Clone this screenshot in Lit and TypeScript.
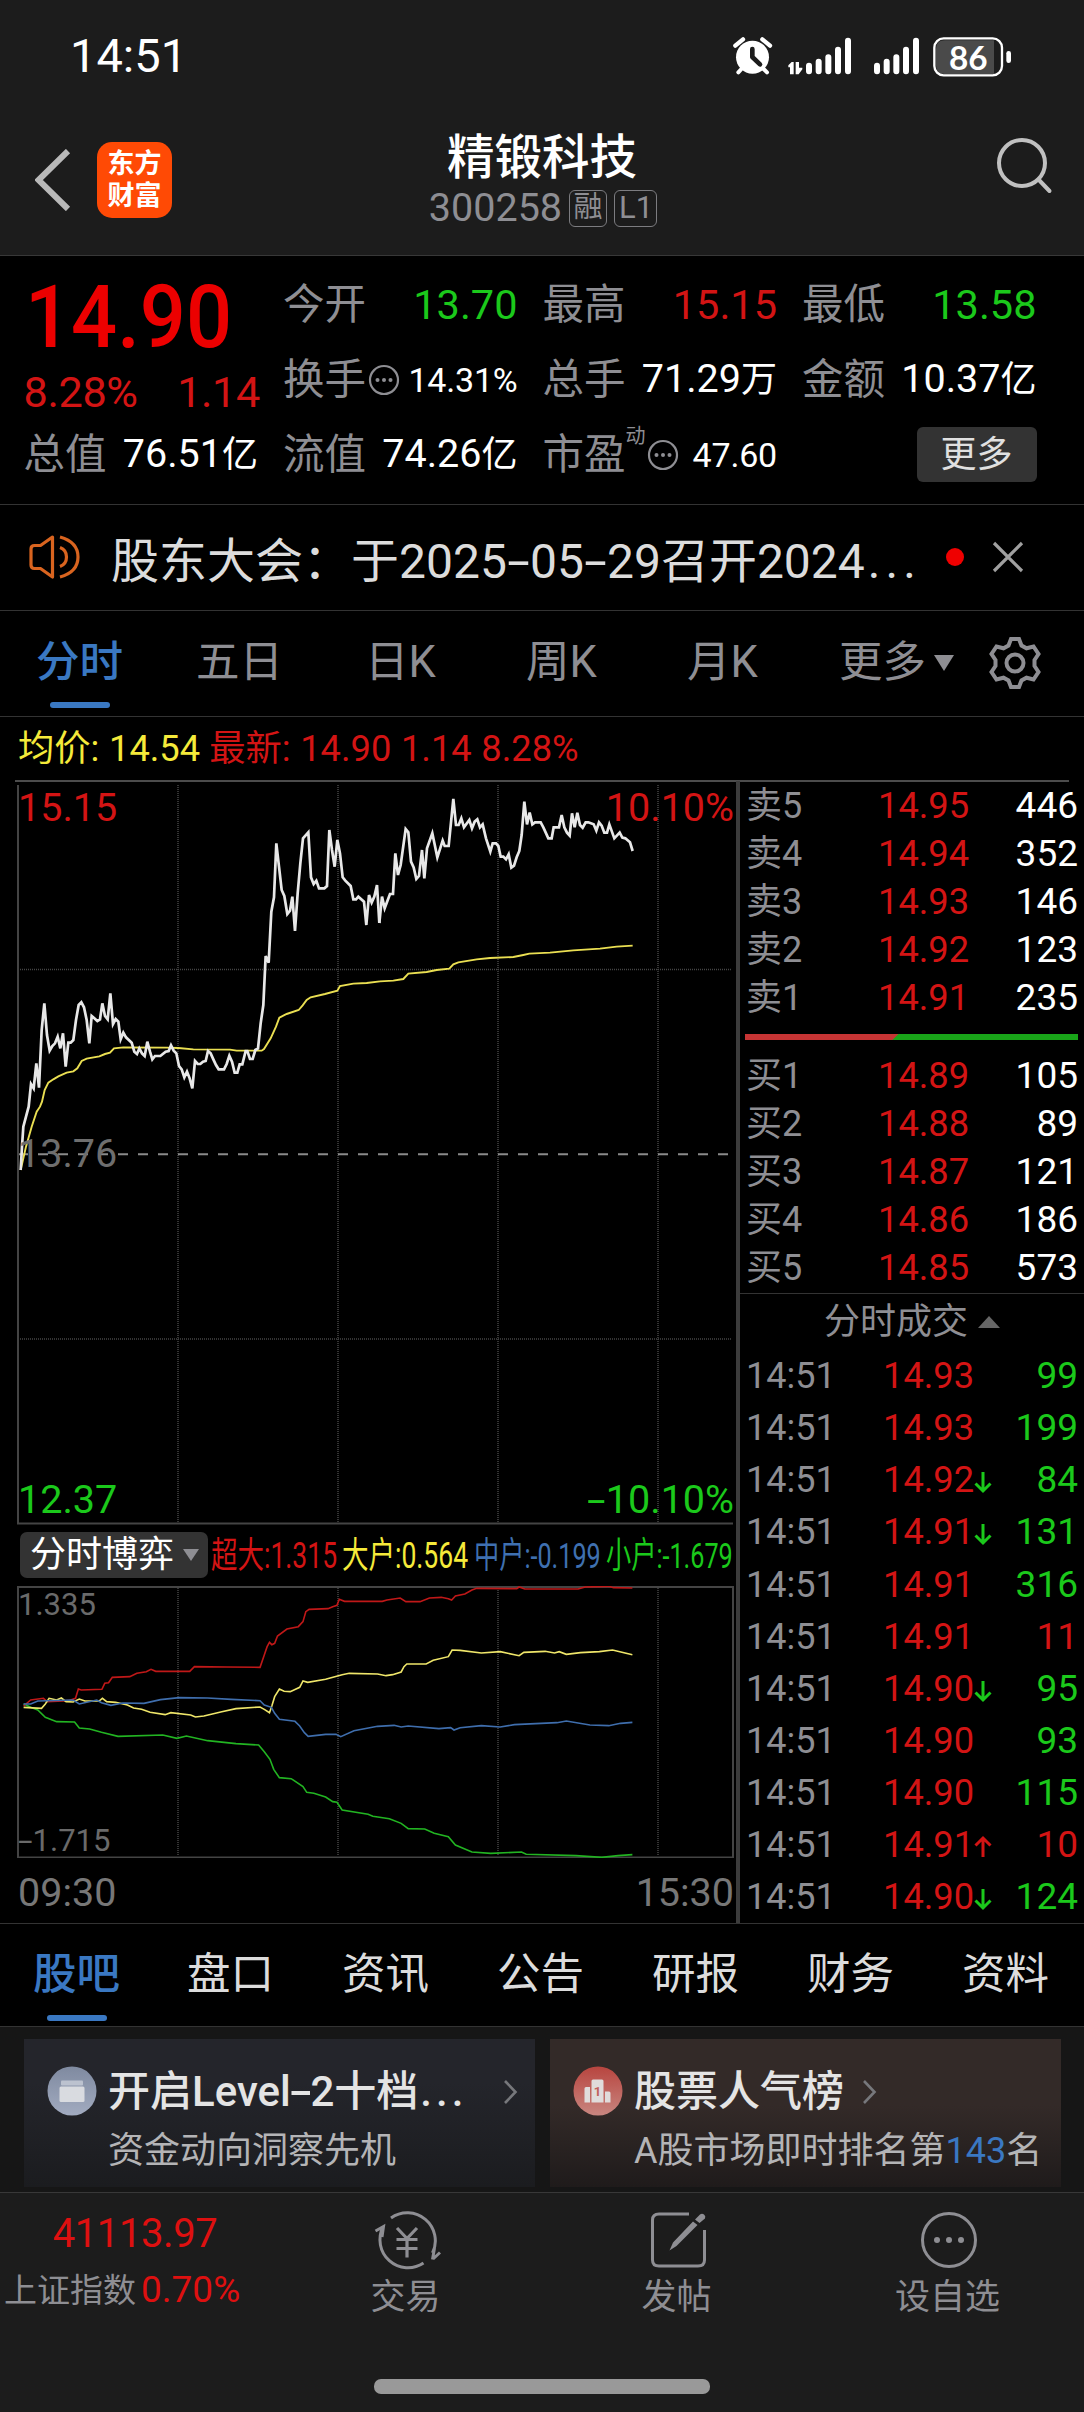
import { LitElement, html, svg, css, nothing } from "lit";
import { customElement, property } from "lit/decorators.js";

type Tone = "up" | "down" | "plain";

/* Wraps every hyphen so that it is drawn as wide as a digit-style minus. */
const dashed = (text: string) =>
  text.split("-").map((part, i) => (i === 0 ? part : html`<span class="dash">-</span>${part}`));

const dashStyle = css`
  .dash {
    display: inline-block;
    width: 0.47em;
    text-align: center;
    transform: scaleX(1.7);
  }
`;

/* ---------- chart data (canvas units) ---------- */

const PRICE_MORNING =
  "62,1200 66,1130 70,1070 78,1040 86,1010 93,942 101,955 109,880 117,953 125,780 133,700 141,795 149,842 157,828 165,820 173,800 181,835 189,790 197,890 205,818 212,818 220,810 228,750 236,705 244,697 252,712 260,750 268,820 275,738 283,745 292,753 300,748 307,700 315,738 323,748 331,670 339,762 347,747 355,755 362,808 370,788 378,802 395,818 403,845 411,852 418,835 426,850 434,858 442,815 450,845 457,868 465,858 481,858 497,845 506,843 513,826 521,842 529,850 537,888 545,898 553,922 561,905 569,925 577,955 585,873 593,882 601,882 609,875 617,873 624,843 632,850 640,868 648,885 656,898 672,898 680,882 688,857 696,875 704,908 712,908 719,883 727,883 737,843 742,843 750,867 758,867 766,840 774,835 782,760 790,705 797,558 806,578 814,425 822,382 829,220 837,290 845,360 853,378 862,432 870,422 877,380 885,483 893,370 901,280 909,205 925,187 933,322 941,342 949,332 957,355 973,355 981,348 988,180 996,240 1004,290 1012,210 1020,250 1028,322 1036,332 1052,348 1060,388 1068,388 1075,380 1092,395 1099,465 1107,375 1115,398 1123,380 1131,345 1138,459";
const PRICE_AFTERNOON =
  "418,459 426,380 434,415 450,372 459,372 466,250 474,315 482,285 497,177 505,187 513,275 521,292 529,327 537,318 546,240 553,325 561,235 577,190 592,262 608,212 614,228 626,228 640,87 648,165 656,165 664,145 672,172 688,150 696,175 704,155 712,148 720,172 728,163 738,205 751,245 758,220 768,220 775,228 782,260 790,260 798,268 806,253 814,293 822,287 830,262 838,243 845,195 853,95 861,163 869,128 877,163 885,157 902,157 910,172 925,205 935,205 941,172 957,172 965,135 973,172 981,188 989,197 996,130 1004,172 1012,128 1020,165 1028,173 1037,157 1045,157 1061,163 1069,182 1077,157 1085,167 1093,188 1101,188 1108,163 1123,205 1139,188 1147,203 1156,205 1170,217 1178,243";
const AVG_MORNING =
  "62,1200 78,1130 95,1070 110,1025 120,1010 126,995 134,960 145,938 160,928 175,919 200,908 220,904 232,895 245,873 260,866 298,859 315,852 330,848 342,835 370,832 500,833 535,834 580,838 690,839 710,842 785,842 792,837 812,805 828,770 838,743 860,732 896,720 908,706 920,690 932,682 975,672 1012,662 1020,648 1060,641 1100,639 1140,634";
const AVG_AFTERNOON =
  "420,634 460,632 490,627 505,611 560,606 590,600 628,596 640,583 655,577 710,568 750,564 820,561 850,555 868,551 930,548 1000,541 1080,536 1130,530 1178,527";

const FLOWS: { cls: string; points: string }[] = [
  {
    cls: "green",
    points:
      "50,672 65,682 80,690 96,712 120,725 158,726 168,744 190,747 215,757 250,769 345,765 375,775 395,768 440,782 500,791 548,795 560,815 572,838 580,868 592,893 617,896 642,920 650,937 665,940 690,951 705,965 714,967 725,990 780,1003 790,1009 825,1016 850,1030 865,1046 900,1047 920,1060 950,1070 965,1095 1000,1116 1040,1120 1105,1116 1115,1123 1220,1127 1275,1132 1310,1127 1340,1124",
  },
  {
    cls: "red",
    points:
      "50,678 65,660 92,655 100,665 145,662 160,655 166,627 172,630 216,628 222,610 230,608 238,592 275,590 290,580 310,575 320,568 330,574 402,574 412,560 480,561 551,562 560,525 566,500 571,487 576,494 582,490 588,468 608,447 632,440 642,425 648,395 655,388 695,386 705,380 714,376 719,358 730,364 810,364 820,360 848,354 860,365 890,365 910,354 935,352 950,356 957,360 965,348 985,342 1000,330 1010,325 1095,326 1100,321 1112,327 1225,327 1240,321 1290,319 1300,323 1340,324",
  },
  {
    cls: "yellow",
    points:
      "50,682 88,685 96,672 104,655 120,660 130,654 140,665 155,666 168,657 180,663 210,663 217,655 226,665 245,667 270,675 283,684 300,688 318,697 350,704 362,698 404,705 414,711 432,708 470,695 500,686 551,681 560,688 571,698 576,678 582,650 592,627 602,634 615,635 635,622 642,603 652,607 690,598 725,584 740,580 800,582 818,587 832,584 850,576 856,560 862,552 903,552 918,541 950,530 958,510 975,511 1020,519 1060,515 1100,527 1110,517 1155,514 1175,519 1185,515 1200,523 1230,518 1270,515 1298,510 1340,524",
  },
  {
    cls: "blue",
    points:
      "50,672 65,672 80,663 155,660 168,672 205,660 215,668 235,676 260,669 305,670 340,659 380,653 440,654 490,658 551,662 560,675 575,682 582,700 592,718 625,724 635,738 645,758 653,769 690,763 712,763 722,770 750,752 800,739 835,736 850,741 865,738 930,746 955,743 962,750 975,743 1020,737 1060,741 1090,734 1180,728 1200,723 1250,735 1290,737 1315,730 1340,727",
  },
];

/* Legend entries share one slot width, so longer ones are condensed further. */
const LEGEND = [
  { cls: "red", text: "超大:1.315", x: 3, squeeze: 0.737 },
  { cls: "yellow", text: "大户:0.564", x: 134, squeeze: 0.737 },
  { cls: "blue", text: "中户:-0.199", x: 266, squeeze: 0.7 },
  { cls: "green", text: "小户:-1.679", x: 398, squeeze: 0.7 },
];

const ASKS: [string, string, string][] = [
  ["卖5", "14.95", "446"],
  ["卖4", "14.94", "352"],
  ["卖3", "14.93", "146"],
  ["卖2", "14.92", "123"],
  ["卖1", "14.91", "235"],
];
const BIDS: [string, string, string][] = [
  ["买1", "14.89", "105"],
  ["买2", "14.88", "89"],
  ["买3", "14.87", "121"],
  ["买4", "14.86", "186"],
  ["买5", "14.85", "573"],
];
const TRADES: [string, "" | "down" | "up", string, Tone][] = [
  ["14.93", "", "99", "down"],
  ["14.93", "", "199", "down"],
  ["14.92", "down", "84", "down"],
  ["14.91", "down", "131", "down"],
  ["14.91", "", "316", "down"],
  ["14.91", "", "11", "up"],
  ["14.90", "down", "95", "down"],
  ["14.90", "", "93", "down"],
  ["14.90", "", "115", "down"],
  ["14.91", "up", "10", "up"],
  ["14.90", "down", "124", "down"],
];

/* ---------- icons ---------- */

const statusIcons = html`<svg class="status-icons" viewBox="0 0 870 180">
  <g fill="#fff">
    <circle cx="85.500" cy="99.500" r="49.500" />
    <path d="M57 46L34 65M115 46L138 65" stroke="#fff" stroke-width="13" stroke-linecap="round" />
    <path d="M55 132L43 145M116 132L129 145" stroke="#fff" stroke-width="12" stroke-linecap="round" />
    <path d="M85 75V99L108 121" fill="none" stroke="#1c1c1c" stroke-width="14" stroke-linecap="round" stroke-linejoin="round" />
    <path d="M193 130V124L203 114H209V151H198V130ZM215 114H225V131H235V136L224 151H215Z" />
  </g>
  <g stroke="#fff" stroke-width="18" stroke-linecap="round">
    <path d="M255 125V142M284 113V142M313 100V142M342 77V142M372 50V142" />
    <path d="M459 125V142M488 113V142M517 100V142M546 77V142M576 50V142" />
  </g>
  <path d="M662 49H810V150H662Q636 150 636 124V75Q636 49 662 49Z" fill="#4a4a4a" />
  <rect x="631" y="43" width="203" height="111" rx="28" fill="none" stroke="#fff" stroke-width="7" />
  <rect x="847" y="81" width="14" height="36" rx="7" fill="#fff" />
  <text x="733" y="137" text-anchor="middle" class="battery">86</text>
</svg>`;

const backIcon = html`<svg width="36" height="62" viewBox="0 0 36 62">
  <path d="M33 2L3.500 31L33 60" fill="none" stroke="#b9b9b9" stroke-width="6" />
</svg>`;

const searchIcon = html`<svg width="57" height="57" viewBox="0 0 57 57">
  <circle cx="26" cy="26" r="23" fill="none" stroke="#c0c0c0" stroke-width="4" />
  <path d="M42.500 42.500L53.500 54" stroke="#c0c0c0" stroke-width="4" stroke-linecap="round" />
</svg>`;

const infoDots = html`<svg class="dots" width="32" height="32" viewBox="0 0 32 32">
  <circle cx="16" cy="16" r="14" fill="none" stroke="#8e8e93" stroke-width="2.200" />
  <g fill="#8e8e93"><circle cx="9.500" cy="16" r="2" /><circle cx="16" cy="16" r="2" /><circle cx="22.500" cy="16" r="2" /></g>
</svg>`;

const speakerIcon = html`<svg width="52" height="46" viewBox="0 0 52 46" fill="none" stroke="#d9641f" stroke-width="3.200" stroke-linejoin="round">
  <path d="M23.500 3L11.500 11.500H5.500Q2 11.500 2 15V31Q2 34.500 5.500 34.500H11.500L23.500 43Z" />
  <path d="M31 13.500Q37.500 16 37.500 23T31 32.500M31 3Q49 8 49 23T31 43" />
</svg>`;

const closeIcon = html`<svg width="32" height="32" viewBox="0 0 32 32">
  <path d="M2 2L30 30M30 2L2 30" stroke="#a0a0a0" stroke-width="3.200" />
</svg>`;

const gearIcon = html`<svg class="gear" width="54" height="54" viewBox="0 0 54 54" fill="none" stroke="#8e8e93" stroke-width="4" stroke-linejoin="miter">
  <path d="M23 3H31L33.500 9.500L38.500 12.300L45.500 10.500L50.500 18L46.500 24V30L50.500 36L45.500 43.500L38.500 41.700L33.500 44.500L31 51H23L20.500 44.500L15.500 41.700L8.500 43.500L3.500 36L7.500 30V24L3.500 18L8.500 10.500L15.500 12.300L20.500 9.500Z" />
  <circle cx="27" cy="27" r="8.500" />
</svg>`;

const tradeIcon = html`<svg width="68" height="62" viewBox="0 0 68 62" fill="none" stroke="#8e8e93" stroke-width="3">
  <path d="M18 9A28 28 0 0 1 59.500 44M60 50L67 43.500M59.500 50.500L61.500 39" />
  <path d="M50.500 54A28 28 0 0 1 10 18M2.500 22L10.500 17.500L9 28" />
  <path d="M24 19L34 29.500L44 19M34 29V48.500M23.500 30.500H44.500M23.500 39.500H44.500" stroke-width="3.200" />
</svg>`;

const postIcon = html`<svg width="58" height="62" viewBox="0 0 58 62">
  <path d="M40 5H10Q3.500 5 3.500 11V51Q3.500 57 10 57H49Q55.500 57 55.500 51V21" fill="none" stroke="#8e8e93" stroke-width="3" />
  <path d="M44 12.500L48.500 16L27.500 37L20.500 41.500L24 33.500ZM46 10.500L51 5.500Q53 4 55 5.500T56 9.500L50.500 14Z" fill="#8e8e93" />
</svg>`;

const moreIcon = html`<svg width="60" height="62" viewBox="0 0 60 62">
  <circle cx="30" cy="31" r="26.500" fill="none" stroke="#8e8e93" stroke-width="3" />
  <g fill="#8e8e93"><circle cx="18" cy="31" r="3" /><circle cx="30" cy="31" r="3" /><circle cx="42" cy="31" r="3" /></g>
</svg>`;

const levelIcon = html`<svg width="50" height="50" viewBox="0 0 50 50">
  <defs><linearGradient id="lv" x1="0" y1="0" x2="0" y2="1"><stop offset="0" stop-color="#7f8aa0" /><stop offset="1" stop-color="#a2abc0" /></linearGradient></defs>
  <circle cx="25" cy="25" r="24.500" fill="url(#lv)" />
  <rect x="14" y="14.500" width="22" height="5" rx="1" fill="#bcc2cf" />
  <rect x="12.500" y="20.500" width="25" height="15.500" rx="1.500" fill="#d9dbe0" />
</svg>`;

const rankIcon = html`<svg width="50" height="50" viewBox="0 0 50 50">
  <defs><linearGradient id="rk" x1="0" y1="0" x2="0" y2="1"><stop offset="0" stop-color="#b8453f" /><stop offset="1" stop-color="#c88680" /></linearGradient></defs>
  <circle cx="25" cy="25" r="24.500" fill="url(#rk)" />
  <path d="M18.500 15Q18.500 13.500 20 13.500H29Q30.500 13.500 30.500 15V36.500H18.500ZM11.500 22.500Q11.500 21 13 21H17V36.500H11.500ZM32 25.500H36Q37.500 25.500 37.500 27V36.500H32Z" fill="#e0dcdb" />
  <text x="24.500" y="29.500" text-anchor="middle" class="rank">1</text>
</svg>`;

const chevron = html`<svg class="chev" width="15" height="26" viewBox="0 0 15 26">
  <path d="M2 2L12.500 13L2 24" fill="none" stroke="#77787c" stroke-width="2.600" />
</svg>`;

const arrow = (dir: "" | "down" | "up") =>
  dir === ""
    ? nothing
    : html`<svg class="arrow ${dir}" width="18" height="24" viewBox="0 0 18 24">
        <path d="M9 2V21M1.500 13.500L9 21L16.500 13.500" fill="none" stroke="currentColor" stroke-width="3" />
      </svg>`;

/* ---------- one label / value pair of the quote panel ---------- */

@customElement("quote-field")
export class QuoteField extends LitElement {
  @property() label = "";
  @property() value = "";
  @property() unit = "";
  @property() sup = "";
  @property() tone: Tone = "plain";
  @property({ type: Boolean }) info = false;

  static styles = css`
    :host {
      display: flex;
      align-items: center;
      justify-content: space-between;
      height: 75px;
      white-space: nowrap;
      line-height: 78px;
      font-size: 41.5px;
    }
    .label {
      display: flex;
      align-items: center;
      margin-left: -1.5px;
      color: #8e8e93;
      font-size: 41.5px;
    }
    .sup {
      align-self: flex-start;
      font-size: 20px;
      line-height: 20px;
      margin-top: 10px;
      margin-right: -1px;
    }
    .dots {
      margin-left: 2px;
    }
    .value.plain {
      color: #fff;
      font-size: 39.5px;
    }
    .value .unit {
      font-size: 36px;
    }
    .value.plain.small {
      font-size: 34px;
      letter-spacing: -0.2px;
    }
    .value.up {
      color: #d31414;
    }
    .value.down {
      color: #1bc91b;
    }
  `;

  render() {
    return html`
      <span class="label">
        ${this.label}${this.sup ? html`<span class="sup">${this.sup}</span>` : nothing}${this.info ? infoDots : nothing}
      </span>
      <span class="value ${this.tone} ${this.info ? "small" : ""}"
        >${this.value}${this.unit ? html`<span class="unit">${this.unit}</span>` : nothing}</span
      >
    `;
  }
}

/* ---------- intraday charts ---------- */

@customElement("intraday-charts")
export class IntradayCharts extends LitElement {
  static styles = [
    dashStyle,
    css`
      :host {
        display: block;
        width: 736px;
        height: 1142px;
        line-height: 1;
      }
      svg {
        display: block;
      }
      .price,
      .flow {
        position: relative;
      }
      .price {
        height: 744px;
      }
      .over {
        position: absolute;
        left: 0;
        top: 0;
      }
      .tag {
        position: absolute;
        font-size: 39.5px;
        line-height: 40px;
      }
      .left {
        left: 18px;
      }
      .right {
        right: 2px;
      }
      .top {
        top: 7px;
      }
      .mid {
        top: 353px;
        color: #6e6e6e;
      }
      .low {
        top: 699px;
      }
      .up {
        color: #d31414;
      }
      .down {
        color: #1bc91b;
      }
      .grid {
        stroke: #454545;
        stroke-width: 1.5;
        stroke-dasharray: 1 1;
      }
      .frame {
        fill: none;
        stroke: #444;
        stroke-width: 2;
      }
      .curve {
        fill: none;
        stroke-linejoin: miter;
        vector-effect: non-scaling-stroke;
      }
      .white {
        stroke: #e8e8e8;
        stroke-width: 2.7;
      }
      .avg {
        stroke: #eadf52;
        stroke-width: 1.9;
      }
      .flow .curve {
        stroke-width: 1.6;
      }
      .curve.red {
        stroke: #c01818;
      }
      .curve.yellow {
        stroke: #efe66a;
      }
      .curve.blue {
        stroke: #3f6ead;
      }
      .curve.green {
        stroke: #22b422;
      }
      .legend-row {
        display: flex;
        align-items: center;
        height: 61px;
        padding-left: 20px;
      }
      .chip {
        display: flex;
        align-items: center;
        gap: 9px;
        box-sizing: border-box;
        width: 188px;
        height: 46px;
        padding-left: 10px;
        border-radius: 7px;
        background: #333;
        color: #fff;
        font-size: 36px;
        line-height: 46px;
      }
      .legend text {
        font-size: 36px;
      }
      .legend .red {
        fill: #d31414;
      }
      .legend .yellow {
        fill: #f5ea3a;
      }
      .legend .blue {
        fill: #3f70b0;
      }
      .legend .green {
        fill: #1bc91b;
      }
      .flow {
        height: 272px;
      }
      .flow .tag {
        color: #6a6a6a;
        font-size: 31px;
        line-height: 32px;
      }
      .flow .high {
        top: 3px;
      }
      .flow .base {
        top: 239px;
      }
      .times {
        display: flex;
        justify-content: space-between;
        padding: 15px 2px 0 18px;
        color: #777;
        font-size: 39.5px;
        line-height: 40px;
      }
    `,
  ];

  render() {
    const columns = [178, 338, 498, 658];
    return html`
      <div class="price">
        <svg width="736" height="744" viewBox="0 0 736 744">
          ${columns.map((x) => svg`<path class="grid" d="M${x} 4V741" />`)}
          <path class="grid" d="M20 188.500H731M20 558H731" />
          <path d="M18 373.300H731" stroke="#8a8a8a" stroke-width="2" stroke-dasharray="10 10" />
          <path class="frame" d="M18 4V742.500H733" />
        </svg>
        <svg class="over" width="736" height="744" viewBox="0 0 736 744">
          <g transform="translate(0 -11) scale(0.33333)">
            <polyline class="curve avg" points=${AVG_MORNING} />
            <polyline class="curve white" points=${PRICE_MORNING} />
            <g transform="translate(720 0)">
              <polyline class="curve avg" points=${AVG_AFTERNOON} />
              <polyline class="curve white" points=${PRICE_AFTERNOON} />
            </g>
          </g>
        </svg>
        <span class="tag left top up">15.15</span>
        <span class="tag right top up">10.10%</span>
        <span class="tag left mid">13.76</span>
        <span class="tag left low down">12.37</span>
        <span class="tag right low down">${dashed("-10.10%")}</span>
      </div>
      <div class="legend-row">
        <span class="chip"
          >分时博弈<svg width="16" height="14" viewBox="0 0 16 14"><path d="M0 1H16L8 13Z" fill="#8e8e93" /></svg
        ></span>
        <svg class="legend" width="528" height="46" viewBox="0 0 528 46">
          ${LEGEND.map(
            (l) => svg`<text class=${l.cls} transform="translate(${l.x} 36) scale(${l.squeeze} 1)">${l.text}</text>`,
          )}
        </svg>
      </div>
      <div class="flow">
        <svg width="736" height="272" viewBox="0 0 736 272">
          ${columns.map((x) => svg`<path class="grid" d="M${x} 2V270" />`)}
          <rect class="frame" x="18" y="1" width="715" height="270.500" />
          <g transform="translate(0 -106) scale(0.47193 0.33333)">
            ${FLOWS.map((f) => svg`<polyline class="curve ${f.cls}" points=${f.points} />`)}
          </g>
        </svg>
        <span class="tag left high">1.335</span>
        <span class="tag left base">${dashed("-1.715")}</span>
      </div>
      <div class="times"><span>09:30</span><span>15:30</span></div>
    `;
  }
}

/* ---------- order book and ticks ---------- */

@customElement("order-book")
export class OrderBook extends LitElement {
  static styles = css`
    :host {
      display: block;
      flex: 1;
      box-sizing: border-box;
      border-left: 4px solid #3c3c3c;
      font-size: 37px;
    }
    .row {
      display: grid;
      grid-template-columns: 132px 110px 1fr;
      padding: 0 6px 0 6px;
      height: 48px;
      line-height: 48px;
      white-space: nowrap;
    }
    .asks {
      padding: 1.5px 0 12px;
    }
    .bids {
      padding: 12px 0 1px;
    }
    .name {
      color: #8e8e93;
      font-size: 36px;
    }
    .up {
      color: #d31414;
    }
    .down {
      color: #1bc91b;
    }
    .plain {
      color: #fff;
    }
    .row .up:not(.qty) {
      font-size: 36.3px;
    }
    .qty {
      text-align: right;
    }
    .ratio {
      height: 6px;
      margin: 0 6px 0 5px;
      background: linear-gradient(135deg, #c63434 0 108px, #19a519 109px);
    }
    .title {
      display: flex;
      align-items: center;
      justify-content: center;
      gap: 10px;
      height: 56px;
      border-top: 1px solid #333;
      color: #8e8e93;
      font-size: 36px;
      line-height: 57px;
    }
    .tick {
      height: 52.13px;
      line-height: 52.13px;
      grid-template-columns: 137px 110px 1fr;
    }
    .time {
      color: #8e8e93;
      font-size: 36px;
    }
    .tick .cell {
      display: flex;
      align-items: center;
    }
    .arrow {
      flex: none;
      margin-top: 4px;
    }
    .arrow.up {
      transform: rotate(180deg);
    }
    .arrow.down {
      color: #1bc91b;
    }
  `;

  private level([name, price, qty]: [string, string, string]) {
    return html`<div class="row">
      <span class="name">${name}</span><span class="up">${price}</span><span class="qty plain">${qty}</span>
    </div>`;
  }

  render() {
    return html`
      <div class="asks">${ASKS.map((r) => this.level(r))}</div>
      <div class="ratio"></div>
      <div class="bids">${BIDS.map((r) => this.level(r))}</div>
      <div class="title">
        分时成交<svg width="22" height="14" viewBox="0 0 22 14"><path d="M0 13L11 1L22 13Z" fill="#666" /></svg>
      </div>
      ${TRADES.map(
        ([price, dir, qty, tone]) => html`<div class="row tick">
          <span class="time">14:51</span><span class="cell up">${price}${arrow(dir)}</span
          ><span class="qty ${tone}">${qty}</span>
        </div>`,
      )}
    `;
  }
}

/* ---------- page ---------- */

@customElement("app-root")
export class AppRoot extends LitElement {
  static styles = [
    dashStyle,
    css`
      :host {
        display: flex;
        flex-direction: column;
        width: 1084px;
        height: 2412px;
        overflow: hidden;
        background: #000;
        color: #ddd;
        font-family: Roboto, "Noto Sans CJK SC", sans-serif;
        white-space: nowrap;
      }
      .top {
        box-sizing: border-box;
        height: 256px;
        background: #1c1c1c;
        border-bottom: 1px solid #383838;
      }
      .status {
        display: flex;
        justify-content: space-between;
        padding: 24px 70px 0 70px;
        height: 88px;
      }
      .clock {
        color: #fff;
        font-size: 47px;
        line-height: 64px;
      }
      .status-icons {
        width: 290px;
        height: 60px;
      }
      .battery {
        font: 700 100px Lato, sans-serif;
        fill: #fff;
      }
      .nav {
        display: grid;
        grid-template-columns: 250px 1fr 250px;
        height: 143px;
      }
      .nav-left {
        display: flex;
        align-items: flex-start;
        padding: 30px 0 0 35px;
        gap: 26px;
      }
      .nav-left svg {
        margin-top: 7px;
      }
      .logo {
        display: grid;
        place-content: center;
        width: 75px;
        height: 76px;
        border-radius: 15px;
        background: #ff4a05;
        color: #fff;
        font-weight: 700;
        font-size: 27px;
        line-height: 32px;
      }
      .nav-mid {
        display: flex;
        flex-direction: column;
        align-items: center;
      }
      .name {
        margin-top: 21px;
        color: #fff;
        font-size: 47.5px;
        line-height: 50px;
        font-weight: 500;
      }
      .code {
        display: flex;
        align-items: center;
        gap: 7px;
        margin-top: 3px;
        margin-left: 2px;
        color: #8e8e93;
        font-size: 39.5px;
        line-height: 44px;
      }
      .badge {
        box-sizing: border-box;
        height: 37px;
        padding: 0 3.5px;
        border: 1.5px solid #7c7c80;
        border-radius: 6px;
        font-size: 29px;
        line-height: 33px;
      }
      .badge.l1 {
        font-size: 31px;
        padding: 0 3px 0 4px;
      }
      .nav-right {
        display: flex;
        justify-content: flex-end;
        padding: 25px 31px 0 0;
      }
      .quote {
        display: grid;
        grid-template-columns: repeat(4, 233px);
        grid-auto-rows: 75px;
        column-gap: 26.5px;
        box-sizing: border-box;
        height: 249px;
        padding: 11px 0 0 25px;
        border-bottom: 1px solid #333;
      }
      .last {
        grid-row: span 2;
        color: #ec0000;
      }
      .big {
        padding-left: 0;
        font-size: 88px;
        font-weight: 500;
        line-height: 99px;
        transform: scaleX(0.922);
        transform-origin: left;
      }
      .change {
        display: flex;
        justify-content: space-between;
        margin-left: -1.5px;
        color: #d31414;
        font-size: 43.3px;
        line-height: 54px;
        letter-spacing: -0.4px;
      }
      .change span:last-child {
        margin-right: -2px;
      }
      .more {
        justify-self: end;
        align-self: center;
        width: 120px;
        height: 55px;
        border-radius: 6px;
        background: #333;
        color: #e0e0e0;
        font-size: 36px;
        line-height: 57px;
        text-align: center;
      }
      .notice {
        display: flex;
        align-items: center;
        box-sizing: border-box;
        height: 106px;
        padding: 0 60px 0 29px;
        border-bottom: 1px solid #333;
      }
      .notice-text {
        flex: 1;
        height: 100px;
        margin-left: 30px;
        padding-top: 5px;
        color: #dcdcdc;
        font-size: 48px;
        line-height: 104px;
      }
      .notice-text .dash {
        width: 0.48em;
      }
      .dots3 {
        letter-spacing: 3px;
      }
      .notice .dots3 {
        margin-left: 3px;
        letter-spacing: 5px;
      }
      .reddot {
        width: 18px;
        height: 18px;
        margin-right: 28px;
        border-radius: 50%;
        background: #ef0000;
      }
      .tabs {
        display: flex;
        align-items: center;
        box-sizing: border-box;
        height: 106px;
        border-bottom: 1px solid #333;
        color: #8e8e93;
        font-size: 43.5px;
        line-height: 102px;
      }
      .tab {
        width: 161px;
        text-align: center;
      }
      .periods {
        padding-right: 41px;
      }
      .periods .tab:first-child {
        width: 159px;
      }
      .tab.on {
        position: relative;
        color: #3a78c2;
        font-weight: 500;
      }
      .tab.on::after {
        content: "";
        position: absolute;
        left: 50%;
        bottom: 5px;
        width: 60px;
        height: 6px;
        margin-left: -30px;
        border-radius: 3px;
        background: #3a78c2;
      }
      .periods .tab.on::after {
        bottom: 6px;
      }
      .tab.wide {
        display: flex;
        align-items: center;
        gap: 8px;
        width: 149px;
        padding-left: 36px;
      }
      .gear {
        flex: none;
      }
      .summary {
        display: flex;
        gap: 9px;
        height: 64px;
        padding-left: 18px;
        color: #d31414;
        font-size: 36.3px;
        line-height: 63px;
        word-spacing: 0.6px;
      }
      .summary .avg {
        color: #f5ea3a;
      }
      .rule {
        height: 2px;
        margin: -1px 15px -1px 15px;
        background: #4c4c4c;
      }
      .market {
        display: flex;
        height: 1142px;
      }
      .sections {
        height: 105px;
        border-top: 1px solid #333;
        color: #dcdcdc;
        line-height: 102px;
      }
      .sections .tab {
        width: 155px;
      }
      .sections .tab:first-child {
        width: 153px;
      }
      .cards {
        display: grid;
        grid-template-columns: 511px 511px;
        gap: 15px;
        box-sizing: border-box;
        height: 165px;
        padding: 12px 24px 5px;
        background: #161616;
      }
      .card {
        display: grid;
        grid-template-columns: 50px 1fr;
        grid-template-rows: 53px 50px;
        align-content: start;
        column-gap: 11px;
        padding: 27px 17px 0 23px;
        background: linear-gradient(#24252b 30%, #1b1c1f);
      }
      .card.warm {
        background: linear-gradient(#332a28 45%, #1f1b1b);
      }
      .card-title {
        display: flex;
        align-items: center;
        color: #e4e4e4;
        font-size: 42px;
        font-weight: 500;
        line-height: 52px;
        margin-top: -2px;
      }
      .card-title .dots3 {
        margin-left: 2px;
        letter-spacing: 4px;
      }
      .card .chev {
        margin-left: auto;
      }
      .card.warm .chev {
        margin-left: 18px;
      }
      .card-sub {
        grid-column: 2;
        color: #b4b4b6;
        font-size: 36px;
        line-height: 65px;
      }
      .rank {
        font: 700 13px Roboto, sans-serif;
        fill: #c0605a;
      }
      .rankno {
        color: #3a78c2;
      }
      .bottom {
        display: grid;
        grid-template-columns: repeat(4, 271px);
        grid-template-rows: 186px auto;
        box-sizing: border-box;
        height: 220px;
        border-top: 1px solid #383838;
        background: #1c1c1c;
        color: #8e8e93;
      }
      .index {
        color: #de1010;
        padding-top: 17px;
      }
      .index-value {
        width: 270px;
        text-align: center;
        font-size: 40px;
        line-height: 48px;
        letter-spacing: -0.4px;
      }
      .index-name {
        padding-left: 4px;
        margin-top: 8px;
        font-size: 37px;
        line-height: 48px;
      }
      .index-name span {
        margin-right: 5px;
        color: #8e8e93;
        font-size: 33px;
      }
      .action {
        display: flex;
        flex-direction: column;
        align-items: center;
        padding-top: 16px;
        font-size: 35px;
        line-height: 53px;
      }
      .action span {
        margin-left: -2px;
      }
      .home {
        grid-column: 1 / -1;
        justify-self: center;
        width: 336px;
        height: 15px;
        border-radius: 7px;
        background: #999;
      }
    `,
  ];

  render() {
    return html`
      <header class="top">
        <div class="status"><span class="clock">14:51</span>${statusIcons}</div>
        <div class="nav">
          <div class="nav-left">
            ${backIcon}
            <div class="logo"><span>东方</span><span>财富</span></div>
          </div>
          <div class="nav-mid">
            <div class="name">精锻科技</div>
            <div class="code">300258<span class="badge">融</span><span class="badge l1">L1</span></div>
          </div>
          <div class="nav-right">${searchIcon}</div>
        </div>
      </header>

      <section class="quote">
        <div class="last">
          <div class="big">14.90</div>
          <div class="change"><span>8.28%</span><span>1.14</span></div>
        </div>
        <quote-field label="今开" value="13.70" tone="down"></quote-field>
        <quote-field label="最高" value="15.15" tone="up"></quote-field>
        <quote-field label="最低" value="13.58" tone="down"></quote-field>
        <quote-field label="换手" value="14.31%" info></quote-field>
        <quote-field label="总手" value="71.29" unit="万"></quote-field>
        <quote-field label="金额" value="10.37" unit="亿"></quote-field>
        <quote-field label="总值" value="76.51" unit="亿"></quote-field>
        <quote-field label="流值" value="74.26" unit="亿"></quote-field>
        <quote-field label="市盈" sup="动" value="47.60" info></quote-field>
        <div class="more">更多</div>
      </section>

      <section class="notice">
        ${speakerIcon}
        <div class="notice-text">股东大会：于${dashed("2025-05-29")}召开2024<span class="dots3">...</span></div>
        <span class="reddot"></span>
        ${closeIcon}
      </section>

      <nav class="tabs periods">
        <span class="tab on">分时</span>
        <span class="tab">五日</span>
        <span class="tab">日K</span>
        <span class="tab">周K</span>
        <span class="tab">月K</span>
        <span class="tab wide"
          >更多<svg width="20" height="18" viewBox="0 0 20 18"><path d="M0 1H20L10 17Z" fill="#8e8e93" /></svg
        ></span>
        ${gearIcon}
      </nav>

      <div class="summary"><span class="avg">均价: 14.54</span><span>最新: 14.90 1.14 8.28%</span></div>
      <div class="rule"></div>
      <main class="market">
        <intraday-charts></intraday-charts>
        <order-book></order-book>
      </main>

      <nav class="tabs sections">
        ${["股吧", "盘口", "资讯", "公告", "研报", "财务", "资料"].map(
          (t, i) => html`<span class="tab ${i === 0 ? "on" : ""}">${t}</span>`,
        )}
      </nav>

      <section class="cards">
        <div class="card">
          ${levelIcon}
          <div class="card-title"><span>开启Level${dashed("-2")}十档<span class="dots3">...</span></span>${chevron}</div>
          <div class="card-sub">资金动向洞察先机</div>
        </div>
        <div class="card warm">
          ${rankIcon}
          <div class="card-title"><span>股票人气榜</span>${chevron}</div>
          <div class="card-sub">A股市场即时排名第<span class="rankno">143</span>名</div>
        </div>
      </section>

      <footer class="bottom">
        <div class="index">
          <div class="index-value">41113.97</div>
          <div class="index-name"><span>上证指数</span>0.70%</div>
        </div>
        <div class="action">${tradeIcon}<span>交易</span></div>
        <div class="action">${postIcon}<span>发帖</span></div>
        <div class="action">${moreIcon}<span>设自选</span></div>
        <div class="home"></div>
      </footer>
    `;
  }
}
